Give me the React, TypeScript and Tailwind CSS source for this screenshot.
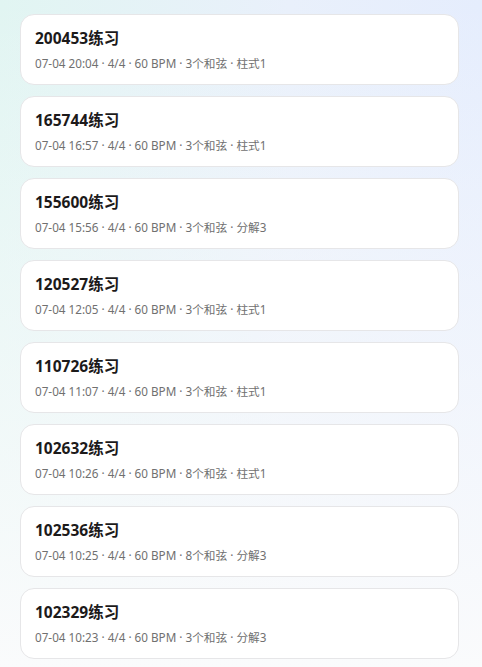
import React from "react";

const items = [
  { id: "200453", meta: "07-04 20:04 · 4/4 · 60 BPM · 3个和弦 · 柱式1" },
  { id: "165744", meta: "07-04 16:57 · 4/4 · 60 BPM · 3个和弦 · 柱式1" },
  { id: "155600", meta: "07-04 15:56 · 4/4 · 60 BPM · 3个和弦 · 分解3" },
  { id: "120527", meta: "07-04 12:05 · 4/4 · 60 BPM · 3个和弦 · 柱式1" },
  { id: "110726", meta: "07-04 11:07 · 4/4 · 60 BPM · 3个和弦 · 柱式1" },
  { id: "102632", meta: "07-04 10:26 · 4/4 · 60 BPM · 8个和弦 · 柱式1" },
  { id: "102536", meta: "07-04 10:25 · 4/4 · 60 BPM · 8个和弦 · 分解3" },
  { id: "102329", meta: "07-04 10:23 · 4/4 · 60 BPM · 3个和弦 · 分解3" },
];

export default function App() {
  return (
    <div
      className="min-h-[667px] w-full bg-[linear-gradient(180deg,rgba(250,251,252,0)_0%,rgba(250,251,252,0.6)_60%,#fafbfc_100%),linear-gradient(90deg,#e1f5f2_0%,#e9f0fb_60%,#e5edfd_100%)] pl-[20px] pr-[23px] pt-[14px] pb-[10px]"
      style={{ fontFamily: '"Noto Sans", "Noto Sans CJK SC", sans-serif' }}
    >
      <div className="flex flex-col gap-[11px]">
        {items.map((it) => (
          <div
            key={it.id}
            className="h-[71px] rounded-[14px] border border-[#e6e6e8] bg-white pl-[14px] pr-4 pt-[13px] flex flex-col"
          >
            <div className="text-[15.5px] leading-[20px] font-bold text-[#1c1a1a]">
              {it.id}练习
            </div>
            <div className="mt-[7px] text-[11.7px] leading-[16px] text-[#707070]">
              {it.meta}
            </div>
          </div>
        ))}
      </div>
    </div>
  );
}
